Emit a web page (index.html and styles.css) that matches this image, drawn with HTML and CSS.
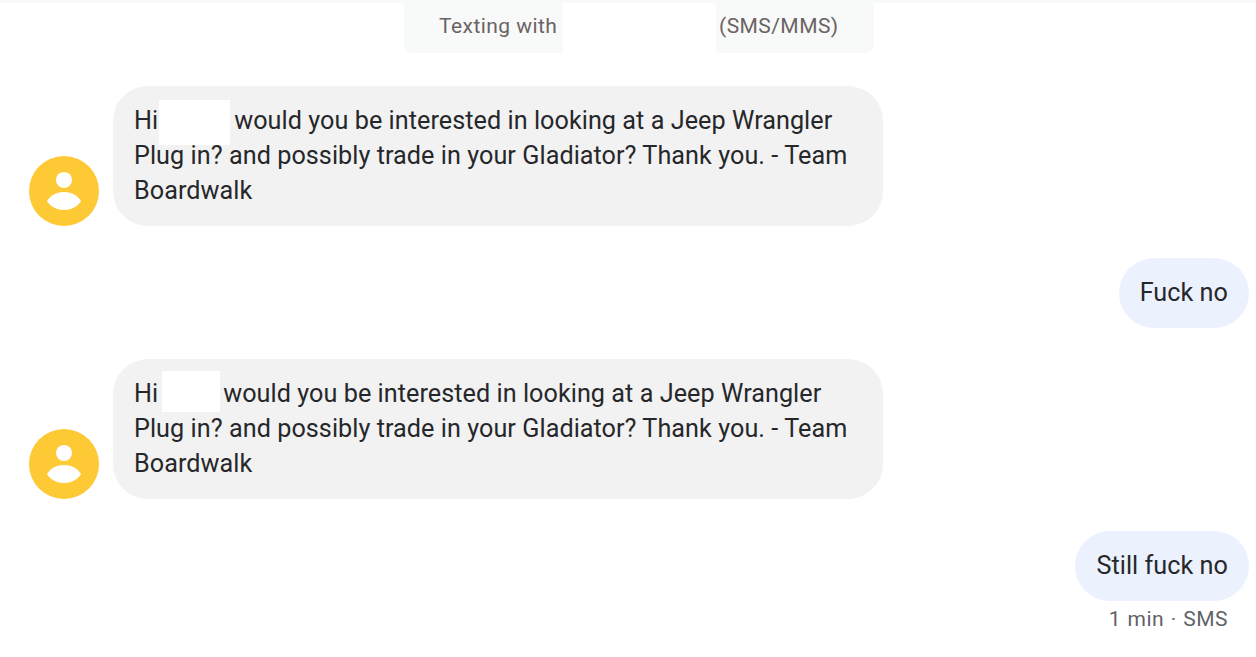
FILE: index.html
```html
<!DOCTYPE html>
<html lang="en">
<head>
    <meta charset="UTF-8">
    <meta name="viewport" content="width=device-width, initial-scale=1.0">
    <title>Messages</title>
    <link rel="stylesheet" href="styles.css">
</head>
<body>
    <div class="top-line"></div>
    <div class="notice">
        <span class="notice-left">Texting with</span>
        <span class="notice-gap"></span>
        <span class="notice-right">(SMS/MMS)</span>
    </div>

    <div class="thread">
        <div class="row incoming">
            <svg class="avatar" viewBox="0 0 70 70">
                <circle cx="35" cy="35" r="35" fill="#fdc935"/>
                <circle cx="35" cy="24" r="8" fill="#fff"/>
                <path d="M18 45 C25 33 45 33 52 45 C45 57 25 57 18 45 Z" fill="#fff"/>
            </svg>
            <div class="bubble">Hi<span class="redact redact-one"></span>would you be interested in looking at a Jeep Wrangler<br>Plug in? and possibly trade in your Gladiator? Thank you. - Team Boardwalk</div>
        </div>

        <div class="row outgoing">
            <div class="bubble">Fuck no</div>
        </div>

        <div class="row incoming">
            <svg class="avatar" viewBox="0 0 70 70">
                <circle cx="35" cy="35" r="35" fill="#fdc935"/>
                <circle cx="35" cy="24" r="8" fill="#fff"/>
                <path d="M18 45 C25 33 45 33 52 45 C45 57 25 57 18 45 Z" fill="#fff"/>
            </svg>
            <div class="bubble">Hi<span class="redact redact-two"></span>would you be interested in looking at a Jeep Wrangler<br>Plug in? and possibly trade in your Gladiator? Thank you. - Team Boardwalk</div>
        </div>

        <div class="row outgoing">
            <div class="bubble">Still fuck no</div>
        </div>
        <div class="meta">1 min · SMS</div>
    </div>
</body>
</html>
```

FILE: styles.css
```css
body {
    margin: 0;
    height: 657px;
    overflow: hidden;
    background-color: #fff;
    font-family: Roboto, sans-serif;
    color: #26272a;
}

.top-line {
    height: 3px;
    background-color: #f8f9fa;
}

/* Banner at the top, the middle part is blanked out */
.notice {
    display: flex;
    width: 470px;
    height: 50px;
    margin-left: 404px;
    font-size: 21px;
    line-height: 46px;
    letter-spacing: 0.45px;
    color: #6b6363;
}

.notice-left, .notice-right {
    background-color: #f8f9f9;
}

.notice-left {
    width: 159px;
    padding-left: 35px;
    box-sizing: border-box;
    border-bottom-left-radius: 8px;
}

.notice-gap {
    width: 153px;
}

.notice-right {
    width: 158px;
    padding-left: 3px;
    box-sizing: border-box;
    border-bottom-right-radius: 8px;
}

.thread {
    display: flex;
    flex-direction: column;
    padding: 33px 7px 0 29px;
}

.row {
    display: flex;
    align-items: flex-end;
    margin-bottom: 31.7px;
}

.avatar {
    width: 70px;
    height: 70px;
    flex-shrink: 0;
    margin-right: 14px;
}

.bubble {
    box-sizing: border-box;
    padding: 17px 21px 18px;
    border-radius: 35px;
    font-size: 25.2px;
    line-height: 35px;
    letter-spacing: 0.05px;
}

.incoming .bubble {
    width: 770px;
    background-color: #f2f2f2;
}

.outgoing {
    justify-content: flex-end;
}

.outgoing .bubble {
    background-color: #ebf1fd;
}

.row:has(+ .meta) {
    margin-bottom: 5px;
}

/* White patches hiding the name, they stick out of the line box */
.redact {
    display: inline-block;
    background-color: #fff;
    vertical-align: middle;
}

.redact-one {
    width: 71px;
    height: 45px;
    margin: -10px 4px -10px 1px;
}

.redact-two {
    width: 58px;
    height: 41px;
    margin: -14px 3px -6px 4px;
}

.meta {
    align-self: flex-end;
    padding-right: 21px;
    font-size: 21px;
    line-height: 26px;
    letter-spacing: 0.5px;
    word-spacing: 0.8px;
    color: #5f6368;
}
```
